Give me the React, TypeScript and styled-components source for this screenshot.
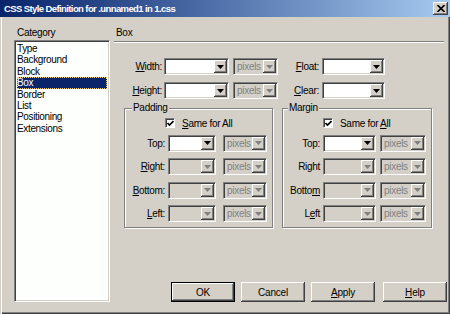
import React from "react";
import styled, { createGlobalStyle } from "styled-components";

const Global = createGlobalStyle`
  html, body { margin: 0; padding: 0; background: #d4d0c8; }
  body {
    width: 450px; height: 314px; overflow: hidden;
    font-family: "Liberation Sans", Arial, sans-serif;
    font-size: 10px; color: #000;
  }
  * { box-sizing: border-box; }
`;

const FACE = "#d4d0c8";
const SHADOW = "#808080";
const DARK = "#404040";

const Window = styled.div`
  width: 450px;
  height: 314px;
  background: ${FACE};
  display: flex;
  flex-direction: column;
  box-shadow: inset 1px 0 ${FACE}, inset 2px 0 #fff, inset -1px -1px ${DARK},
    inset -2px -2px ${SHADOW};
`;

const TitleBar = styled.div`
  height: 17px;
  flex: none;
  display: flex;
  align-items: center;
  padding: 0 2px 0 4px;
  background: linear-gradient(to right, #0a246a 0%, #3a5a98 35%, #a6caf0 100%);
  color: #fff;
  font-weight: bold;
  font-size: 9.5px;
  letter-spacing: -0.6px;
`;

const TitleText = styled.span`
  flex: 1;
  white-space: nowrap;
`;

const CloseButton = styled.div`
  width: 15px;
  height: 13px;
  background: ${FACE};
  display: flex;
  align-items: center;
  justify-content: center;
  box-shadow: inset -1px -1px ${DARK}, inset 1px 1px #fff, inset -2px -2px ${SHADOW};
`;

const Body = styled.div`
  flex: 1;
  display: grid;
  grid-template-columns: 96px 1fr;
  column-gap: 4px;
  padding: 10px 3px 12px 14px;
  min-height: 0;
`;

const Column = styled.div`
  display: flex;
  flex-direction: column;
  min-height: 0;
`;

const Caption = styled.div<{ $indent: number }>`
  height: 12px;
  line-height: 12px;
  padding-left: ${(p) => p.$indent}px;
  letter-spacing: -0.3px;
`;

const ListBox = styled.div`
  margin-top: 1px;
  flex: 1;
  background: #fcfffc;
  border: 1px solid;
  border-color: ${SHADOW} #fff #fff ${SHADOW};
  box-shadow: inset 1px 1px ${DARK}, inset -1px -1px ${FACE};
  padding: 2px;
  display: flex;
  flex-direction: column;
`;

const ListItem = styled.div<{ $selected?: boolean }>`
  height: 11.4px;
  line-height: 11.4px;
  padding-left: 0;
  letter-spacing: -0.35px;
  white-space: nowrap;
  background: ${(p) => (p.$selected ? "#0a246a" : "transparent")};
  color: ${(p) => (p.$selected ? "#fff" : "#000")};
  outline: ${(p) => (p.$selected ? "1px dotted #f0d070" : "none")};
  outline-offset: -1px;
`;

const Rule = styled.div`
  margin: 2px 3px 0 0;
  border-top: 1px solid ${SHADOW};
  border-bottom: 1px solid #fff;
`;

const TopGrid = styled.div`
  margin-top: 15px;
  display: grid;
  grid-template-columns: 50px 65px 49px 44px 63px;
  grid-auto-rows: 17px;
  row-gap: 7px;
  align-items: center;
`;

const Label = styled.span<{ $pad?: number }>`
  text-align: right;
  padding-right: ${(p) => p.$pad ?? 2}px;
  white-space: nowrap;
  letter-spacing: -0.3px;
`;

const Combo = styled.div<{ $w: number; $disabled?: boolean; $ml?: number }>`
  width: ${(p) => p.$w}px;
  height: 17px;
  margin-left: ${(p) => p.$ml ?? 0}px;
  display: flex;
  border: 1px solid;
  border-color: ${SHADOW} #fff #fff ${SHADOW};
  box-shadow: inset 1px 1px ${DARK}, inset -1px -1px ${FACE};
  background: ${(p) => (p.$disabled ? FACE : "#fff")};
  padding: 1px;
`;

const ComboText = styled.span<{ $disabled?: boolean }>`
  flex: 1;
  padding-left: 2px;
  line-height: 13px;
  color: ${(p) => (p.$disabled ? SHADOW : "#000")};
  letter-spacing: -0.3px;
  overflow: hidden;
`;

const DropButton = styled.span`
  width: 13px;
  height: 13px;
  background: ${FACE};
  display: flex;
  align-items: center;
  justify-content: center;
  box-shadow: inset -1px -1px ${DARK}, inset 1px 1px #fff, inset -2px -2px ${SHADOW};
`;

const Groups = styled.div`
  margin-top: 3px;
  display: flex;
`;

const Group = styled.fieldset<{ $w: number; $ml: number }>`
  margin: 0 0 0 ${(p) => p.$ml}px;
  padding: 4px 0 0 0;
  width: ${(p) => p.$w}px;
  height: 126px;
  border: 1px solid ${SHADOW};
  box-shadow: inset 1px 1px #fff, 1px 1px #fff;
  min-width: 0;
`;

const Legend = styled.legend<{ $ml: number }>`
  margin-left: ${(p) => p.$ml}px;
  padding: 0 1px;
  line-height: 12px;
  background: ${FACE};
  letter-spacing: -0.3px;
`;

const GroupGrid = styled.div<{ $cols: string }>`
  display: grid;
  grid-template-columns: ${(p) => p.$cols};
  grid-template-rows: 10px repeat(4, 17px);
  row-gap: 6.5px;
  align-items: center;
`;

const CheckRow = styled.div<{ $ml: number }>`
  grid-column: 2 / span 2;
  height: 10px;
  margin-left: ${(p) => p.$ml}px;
  margin-bottom: -0.5px;
  display: flex;
  align-items: center;
  gap: 7px;
  letter-spacing: -0.3px;
  white-space: nowrap;
`;

const CheckBox = styled.span`
  width: 10px;
  height: 10px;
  background: #fff;
  border: 1px solid;
  border-color: ${SHADOW} #fff #fff ${SHADOW};
  box-shadow: inset 1px 1px ${DARK};
  display: flex;
  align-items: center;
  justify-content: center;
`;

const ButtonRow = styled.div`
  margin-top: auto;
  display: flex;
  justify-content: flex-end;
`;

const Button = styled.div<{ $default?: boolean; $ml: number }>`
  width: 64px;
  height: 20px;
  margin-left: ${(p) => p.$ml}px;
  display: flex;
  align-items: center;
  justify-content: center;
  background: ${FACE};
  letter-spacing: -0.2px;
  border: ${(p) => (p.$default ? "1px solid #000" : "none")};
  box-shadow: inset -1px -1px ${DARK}, inset 1px 1px #fff, inset -2px -2px ${SHADOW};
`;

const Arrow = ({ disabled }: { disabled?: boolean }) => (
  <svg width="7" height="4" viewBox="0 0 7 4">
    <path d="M0 0h7L3.5 4z" fill={disabled ? SHADOW : "#000"} />
  </svg>
);

const Select = ({
  w,
  text = "",
  disabled,
  ml,
}: {
  w: number;
  text?: string;
  disabled?: boolean;
  ml?: number;
}) => (
  <Combo $w={w} $disabled={disabled} $ml={ml}>
    <ComboText $disabled={disabled}>{text}</ComboText>
    <DropButton>
      <Arrow disabled={disabled} />
    </DropButton>
  </Combo>
);

const Check = () => (
  <CheckBox>
    <svg width="7" height="7" viewBox="0 0 7 7">
      <path d="M0.5 3l2 2 4-4" stroke="#000" strokeWidth="1.6" fill="none" />
    </svg>
  </CheckBox>
);

const categories = [
  "Type",
  "Background",
  "Block",
  "Box",
  "Border",
  "List",
  "Positioning",
  "Extensions",
];

type Row = { label: React.ReactNode };

const BoxGroup = ({
  title,
  legendMl,
  w,
  ml,
  cols,
  sel,
  unit,
  checkMl,
  check,
  rows,
}: {
  title: string;
  legendMl: number;
  w: number;
  ml: number;
  cols: string;
  sel: number;
  unit: number;
  checkMl: number;
  check: React.ReactNode;
  rows: Row[];
}) => (
  <Group $w={w} $ml={ml}>
    <Legend $ml={legendMl}>{title}</Legend>
    <GroupGrid $cols={cols}>
      <CheckRow $ml={checkMl}>
        <Check />
        <span>{check}</span>
      </CheckRow>
      {rows.map((r, i) => (
        <React.Fragment key={i}>
          <Label $pad={3}>{r.label}</Label>
          <Select w={sel} disabled={i > 0} />
          <Select w={unit} text="pixels" disabled />
        </React.Fragment>
      ))}
    </GroupGrid>
  </Group>
);

export default function App() {
  return (
    <>
      <Global />
      <Window>
        <TitleBar>
          <TitleText>CSS Style Definition for .unnamed1 in 1.css</TitleText>
          <CloseButton>
            <svg width="8" height="7" viewBox="0 0 8 7">
              <path d="M0.5 0l7 7M7.5 0l-7 7" stroke="#000" strokeWidth="1.6" />
            </svg>
          </CloseButton>
        </TitleBar>
        <Body>
          <Column>
            <Caption $indent={3}>Category</Caption>
            <ListBox>
              {categories.map((c) => (
                <ListItem key={c} $selected={c === "Box"}>
                  {c}
                </ListItem>
              ))}
            </ListBox>
          </Column>
          <Column>
            <Caption $indent={2}>Box</Caption>
            <Rule />
            <TopGrid>
              <Label>
                <u>W</u>idth:
              </Label>
              <Select w={65} />
              <Select w={45} text="pixels" disabled ml={4} />
              <Label $pad={3}>
                <u>F</u>loat:
              </Label>
              <Select w={63} />
              <Label>
                <u>H</u>eight:
              </Label>
              <Select w={65} />
              <Select w={45} text="pixels" disabled ml={4} />
              <Label $pad={3}>
                <u>C</u>lear:
              </Label>
              <Select w={63} />
            </TopGrid>
            <Groups>
              <BoxGroup
                title="Padding"
                legendMl={7}
                w={149}
                ml={10}
                cols="43px 55px 48px"
                sel={48}
                unit={44}
                checkMl={-3}
                check={
                  <>
                    <u>S</u>ame for All
                  </>
                }
                rows={[
                  { label: "Top:" },
                  {
                    label: (
                      <>
                        <u>R</u>ight:
                      </>
                    ),
                  },
                  {
                    label: (
                      <>
                        <u>B</u>ottom:
                      </>
                    ),
                  },
                  {
                    label: (
                      <>
                        <u>L</u>eft:
                      </>
                    ),
                  },
                ]}
              />
              <BoxGroup
                title="Margin"
                legendMl={5}
                w={150}
                ml={9}
                cols="40px 57px 50px"
                sel={53}
                unit={46}
                checkMl={0}
                check={
                  <>
                    Same for <u>A</u>ll
                  </>
                }
                rows={[
                  { label: "Top:" },
                  { label: "Right" },
                  {
                    label: (
                      <>
                        Botto<u>m</u>
                      </>
                    ),
                  },
                  {
                    label: (
                      <>
                        L<u>e</u>ft
                      </>
                    ),
                  },
                ]}
              />
            </Groups>
            <ButtonRow>
              <Button $default $ml={0}>
                OK
              </Button>
              <Button $ml={6}>Cancel</Button>
              <Button $ml={6}>
                <u>A</u>pply
              </Button>
              <Button $ml={8}>
                <u>H</u>elp
              </Button>
            </ButtonRow>
          </Column>
        </Body>
      </Window>
    </>
  );
}
